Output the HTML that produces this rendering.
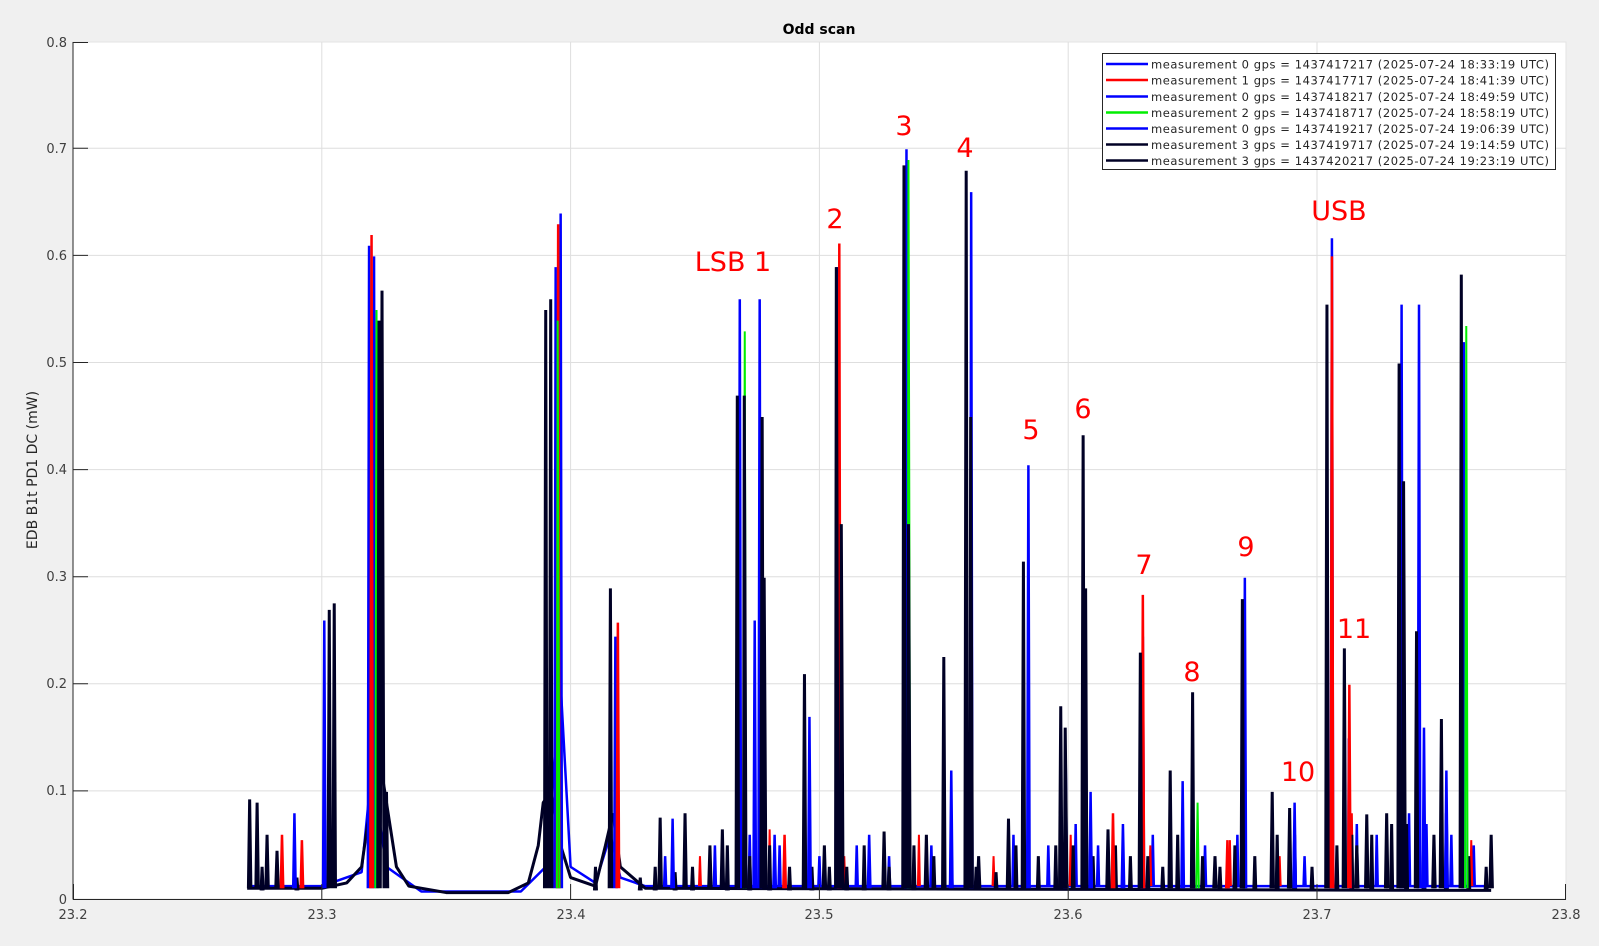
<!DOCTYPE html>
<html><head><meta charset="utf-8"><style>
html,body{margin:0;padding:0;background:#f0f0f0;}
svg{display:block;font-family:"DejaVu Sans","Liberation Sans",sans-serif;}
</style></head><body>
<svg width="1599" height="946" viewBox="0 0 1599 946" xmlns="http://www.w3.org/2000/svg">
<rect x="0" y="0" width="1599" height="946" fill="#f0f0f0"/>
<rect x="73" y="42" width="1493" height="857" fill="#fff" stroke="#e3e3e3"/>
<g stroke="#dedede" stroke-width="1">
<line x1="321.8" y1="42" x2="321.8" y2="899"/><line x1="570.6" y1="42" x2="570.6" y2="899"/><line x1="819.4" y1="42" x2="819.4" y2="899"/><line x1="1068.2" y1="42" x2="1068.2" y2="899"/><line x1="1317" y1="42" x2="1317" y2="899"/>
<line x1="73" y1="148.3" x2="1566" y2="148.3"/><line x1="73" y1="255.4" x2="1566" y2="255.4"/><line x1="73" y1="362.5" x2="1566" y2="362.5"/><line x1="73" y1="469.6" x2="1566" y2="469.6"/><line x1="73" y1="576.7" x2="1566" y2="576.7"/><line x1="73" y1="683.8" x2="1566" y2="683.8"/><line x1="73" y1="790.9" x2="1566" y2="790.9"/>
</g>
<g transform="translate(73,899) scale(2488,-1071) translate(-23.2,0)" fill="none" stroke-linejoin="bevel">
<!-- blue/red noise (narrow) -->
<g stroke="#0000ff" stroke-width="2.5">
<path vector-effect="non-scaling-stroke" d="M23.27 0.012 L23.3 0.012 L23.316 0.025 L23.32 0.12 L23.326 0.03 L23.34 0.007 L23.38 0.007 L23.39 0.03 L23.396 0.2 L23.4 0.03 L23.41 0.015 L23.416 0.06 L23.42 0.02 L23.43 0.012 L23.77 0.012"/>
<path vector-effect="non-scaling-stroke" d="M23.4376 0.012 L23.438 0.04 L23.4384 0.012 M23.4576 0.012 L23.458 0.05 L23.4584 0.012 M23.4716 0.012 L23.472 0.06 L23.4724 0.012 M23.4836 0.012 L23.484 0.05 L23.4844 0.012 M23.4996 0.012 L23.5 0.04 L23.5004 0.012 M23.5146 0.012 L23.515 0.05 L23.5154 0.012 M23.5276 0.012 L23.528 0.04 L23.5284 0.012 M23.5446 0.012 L23.545 0.05 L23.5454 0.012 M23.5776 0.012 L23.578 0.06 L23.5784 0.012 M23.5916 0.012 L23.592 0.05 L23.5924 0.012 M23.6026 0.012 L23.603 0.07 L23.6034 0.012 M23.6116 0.012 L23.612 0.05 L23.6124 0.012 M23.6336 0.012 L23.634 0.06 L23.6344 0.012 M23.6546 0.012 L23.655 0.05 L23.6554 0.012 M23.6676 0.012 L23.668 0.06 L23.6684 0.012 M23.6946 0.012 L23.695 0.04 L23.6954 0.012 M23.7156 0.012 L23.716 0.07 L23.7164 0.012 M23.7236 0.012 L23.724 0.06 L23.7244 0.012 M23.7366 0.012 L23.737 0.08 L23.7374 0.012 M23.7436 0.012 L23.744 0.07 L23.7444 0.012 M23.7536 0.012 L23.754 0.06 L23.7544 0.012 M23.7626 0.012 L23.763 0.05 L23.7634 0.012"/>
</g>
<g stroke="#ff0000" stroke-width="2">
<path vector-effect="non-scaling-stroke" d="M23.4516 0.012 L23.452 0.04 L23.4524 0.012 M23.4796 0.012 L23.48 0.065 L23.4804 0.012 M23.5096 0.012 L23.51 0.04 L23.5104 0.012 M23.5396 0.012 L23.54 0.06 L23.5404 0.012 M23.5696 0.012 L23.57 0.04 L23.5704 0.012 M23.6006 0.012 L23.601 0.06 L23.6014 0.012 M23.6326 0.012 L23.633 0.05 L23.6334 0.012 M23.6646 0.012 L23.665 0.055 L23.6654 0.012 M23.6846 0.012 L23.685 0.04 L23.6854 0.012 M23.7136 0.012 L23.714 0.08 L23.7144 0.012 M23.7326 0.012 L23.733 0.1 L23.7334 0.012 M23.7496 0.012 L23.75 0.08 L23.7504 0.012 M23.7616 0.012 L23.762 0.055 L23.7624 0.012"/>
</g>
<!-- broad skirts / noise black -->
<g stroke="#000025" stroke-width="3">
<path vector-effect="non-scaling-stroke" d="M23.27 0.01 L23.3 0.01 L23.31 0.015 L23.316 0.03 L23.319 0.08 L23.322 0.15 L23.326 0.09 L23.33 0.03 L23.335 0.012 L23.35 0.006 L23.375 0.006 L23.383 0.015 L23.387 0.05 L23.389 0.09 L23.392 0.1 L23.396 0.05 L23.4 0.02 L23.41 0.012 L23.414 0.05 L23.417 0.08 L23.42 0.03 L23.43 0.01 L23.77 0.008"/>
<path vector-effect="non-scaling-stroke" d="M23.2756 0.008 L23.276 0.03 L23.2764 0.008 M23.2896 0.008 L23.29 0.02 L23.2904 0.008 M23.4096 0.008 L23.41 0.03 L23.4104 0.008 M23.4276 0.008 L23.428 0.02 L23.4284 0.008 M23.4336 0.008 L23.434 0.03 L23.4344 0.008 M23.4416 0.008 L23.442 0.025 L23.4424 0.008 M23.4486 0.008 L23.449 0.03 L23.4494 0.008 M23.4626 0.008 L23.463 0.05 L23.4634 0.008 M23.4716 0.008 L23.472 0.04 L23.4724 0.008 M23.4796 0.008 L23.48 0.05 L23.4804 0.008 M23.4876 0.008 L23.488 0.03 L23.4884 0.008 M23.4966 0.008 L23.497 0.03 L23.4974 0.008 M23.5036 0.008 L23.504 0.03 L23.5044 0.008 M23.5106 0.008 L23.511 0.03 L23.5114 0.008 M23.5176 0.008 L23.518 0.05 L23.5184 0.008 M23.5276 0.008 L23.528 0.03 L23.5284 0.008 M23.5376 0.008 L23.538 0.05 L23.5384 0.008 M23.5456 0.008 L23.546 0.04 L23.5464 0.008 M23.5526 0.008 L23.553 0.05 L23.5534 0.008 M23.5626 0.008 L23.563 0.03 L23.5634 0.008 M23.5706 0.008 L23.571 0.025 L23.5714 0.008 M23.5786 0.008 L23.579 0.05 L23.5794 0.008 M23.5876 0.008 L23.588 0.04 L23.5884 0.008 M23.5946 0.008 L23.595 0.05 L23.5954 0.008 M23.6016 0.008 L23.602 0.05 L23.6024 0.008 M23.6096 0.008 L23.61 0.04 L23.6104 0.008 M23.6186 0.008 L23.619 0.05 L23.6194 0.008 M23.6246 0.008 L23.625 0.04 L23.6254 0.008 M23.6316 0.008 L23.632 0.04 L23.6324 0.008 M23.6376 0.008 L23.638 0.03 L23.6384 0.008 M23.6436 0.008 L23.644 0.06 L23.6444 0.008 M23.6536 0.008 L23.654 0.04 L23.6544 0.008 M23.6606 0.008 L23.661 0.03 L23.6614 0.008 M23.6666 0.008 L23.667 0.05 L23.6674 0.008 M23.6746 0.008 L23.675 0.04 L23.6754 0.008 M23.6836 0.008 L23.684 0.06 L23.6844 0.008 M23.6906 0.008 L23.691 0.06 L23.6914 0.008 M23.6976 0.008 L23.698 0.03 L23.6984 0.008 M23.7076 0.008 L23.708 0.05 L23.7084 0.008 M23.7136 0.008 L23.714 0.06 L23.7144 0.008 M23.7216 0.008 L23.722 0.06 L23.7224 0.008 M23.7296 0.008 L23.73 0.07 L23.7304 0.008 M23.7356 0.008 L23.736 0.07 L23.7364 0.008 M23.7426 0.008 L23.743 0.08 L23.7434 0.008 M23.7516 0.008 L23.752 0.08 L23.7524 0.008 M23.7606 0.008 L23.761 0.04 L23.7614 0.008 M23.7676 0.008 L23.768 0.03 L23.7684 0.008"/>
</g>
<!-- blue peaks -->
<g stroke="#0000ff" stroke-width="2.5">
<path vector-effect="non-scaling-stroke" d="M23.2885 0.01 L23.289 0.08 L23.2895 0.01 M23.3005 0.01 L23.301 0.26 L23.3015 0.01 M23.3185 0.01 L23.319 0.61 L23.3195 0.01 M23.3205 0.01 L23.321 0.6 L23.3215 0.01 M23.3955 0.01 L23.396 0.64 L23.3965 0.01 M23.3935 0.01 L23.394 0.59 L23.3945 0.01 M23.4175 0.01 L23.418 0.245 L23.4185 0.01 M23.4405 0.01 L23.441 0.075 L23.4415 0.01 M23.4675 0.01 L23.468 0.56 L23.4685 0.01 M23.4755 0.01 L23.476 0.56 L23.4765 0.01 M23.4735 0.01 L23.474 0.26 L23.4745 0.01 M23.4955 0.01 L23.496 0.17 L23.4965 0.01 M23.5065 0.01 L23.507 0.59 L23.5075 0.01 M23.5345 0.01 L23.535 0.7 L23.5355 0.01 M23.5605 0.01 L23.561 0.66 L23.5615 0.01 M23.5835 0.01 L23.584 0.405 L23.5845 0.01 M23.5985 0.01 L23.599 0.13 L23.5995 0.01 M23.6295 0.01 L23.63 0.245 L23.6305 0.01 M23.6705 0.01 L23.671 0.3 L23.6715 0.01 M23.6905 0.01 L23.691 0.09 L23.6915 0.01 M23.7055 0.01 L23.706 0.617 L23.7065 0.01 M23.7335 0.01 L23.734 0.555 L23.7345 0.01 M23.7405 0.01 L23.741 0.555 L23.7415 0.01 M23.7585 0.01 L23.759 0.52 L23.7595 0.01 M23.6455 0.01 L23.646 0.11 L23.6465 0.01 M23.6215 0.01 L23.622 0.07 L23.6225 0.01 M23.5195 0.01 L23.52 0.06 L23.5205 0.01 M23.4815 0.01 L23.482 0.06 L23.4825 0.01 M23.6085 0.01 L23.609 0.1 L23.6095 0.01 M23.5525 0.01 L23.553 0.12 L23.5535 0.01 M23.7125 0.01 L23.7128 0.15 L23.7135 0.01 M23.7425 0.01 L23.743 0.16 L23.7435 0.01 M23.7515 0.01 L23.752 0.12 L23.7525 0.01"/>
</g>
<!-- red peaks -->
<g stroke="#ff0000" stroke-width="2.5">
<path vector-effect="non-scaling-stroke" d="M23.2835 0.01 L23.284 0.06 L23.2845 0.01 M23.2915 0.01 L23.292 0.055 L23.2925 0.01 M23.3195 0.01 L23.32 0.62 L23.3205 0.01 M23.3945 0.01 L23.395 0.63 L23.3955 0.01 M23.4185 0.01 L23.419 0.258 L23.4195 0.01 M23.5075 0.01 L23.508 0.612 L23.5085 0.01 M23.6295 0.01 L23.63 0.284 L23.6305 0.01 M23.7055 0.01 L23.706 0.6 L23.7065 0.01 M23.4855 0.01 L23.486 0.06 L23.4865 0.01 M23.6635 0.01 L23.664 0.055 L23.6645 0.01 M23.7125 0.01 L23.713 0.2 L23.7135 0.01 M23.6175 0.01 L23.618 0.08 L23.6185 0.01"/>
</g>
<!-- green peaks -->
<g stroke="#00ee00" stroke-width="2">
<path vector-effect="non-scaling-stroke" d="M23.3215 0.01 L23.322 0.55 L23.3225 0.01 M23.3945 0.01 L23.3948 0.54 L23.3955 0.01 M23.4695 0.01 L23.47 0.53 L23.4705 0.01 M23.7595 0.01 L23.76 0.535 L23.7605 0.01 M23.5355 0.01 L23.5358 0.69 L23.5365 0.01 M23.6515 0.01 L23.652 0.09 L23.6525 0.01"/>
</g>
<!-- black peaks -->
<g stroke="#000025" stroke-width="3">
<path vector-effect="non-scaling-stroke" d="M23.2705 0.01 L23.271 0.093 L23.2715 0.01 M23.2735 0.01 L23.274 0.09 L23.2745 0.01 M23.2775 0.01 L23.278 0.06 L23.2785 0.01 M23.3025 0.01 L23.303 0.27 L23.3035 0.01 M23.3045 0.01 L23.305 0.276 L23.3055 0.01 M23.3225 0.01 L23.323 0.54 L23.3235 0.01 M23.3235 0.01 L23.3242 0.568 L23.325 0.01 M23.3255 0.01 L23.326 0.1 L23.3265 0.01 M23.3895 0.01 L23.39 0.55 L23.3905 0.01 M23.3915 0.01 L23.392 0.56 L23.3925 0.01 M23.4155 0.01 L23.416 0.29 L23.4165 0.01 M23.4355 0.01 L23.436 0.076 L23.4365 0.01 M23.4455 0.01 L23.446 0.08 L23.4465 0.01 M23.4665 0.01 L23.467 0.47 L23.4675 0.01 M23.4695 0.01 L23.4698 0.47 L23.4705 0.01 M23.4765 0.01 L23.477 0.45 L23.4775 0.01 M23.4935 0.01 L23.494 0.21 L23.4945 0.01 M23.5065 0.01 L23.5068 0.59 L23.5075 0.01 M23.5255 0.01 L23.526 0.063 L23.5265 0.01 M23.5335 0.01 L23.534 0.685 L23.5345 0.01 M23.5495 0.01 L23.55 0.226 L23.5505 0.01 M23.5585 0.01 L23.559 0.68 L23.5595 0.01 M23.5815 0.01 L23.582 0.315 L23.5825 0.01 M23.5755 0.01 L23.576 0.075 L23.5765 0.01 M23.5965 0.01 L23.597 0.18 L23.5975 0.01 M23.6055 0.01 L23.606 0.433 L23.6065 0.01 M23.6065 0.01 L23.607 0.29 L23.6075 0.01 M23.6285 0.01 L23.629 0.23 L23.6295 0.01 M23.6405 0.01 L23.641 0.12 L23.6415 0.01 M23.6495 0.01 L23.65 0.193 L23.6505 0.01 M23.6695 0.01 L23.67 0.28 L23.6705 0.01 M23.6815 0.01 L23.682 0.1 L23.6825 0.01 M23.6885 0.01 L23.689 0.085 L23.6895 0.01 M23.7035 0.01 L23.704 0.555 L23.7045 0.01 M23.7105 0.01 L23.711 0.234 L23.7115 0.01 M23.7195 0.01 L23.72 0.079 L23.7205 0.01 M23.7275 0.01 L23.728 0.08 L23.7285 0.01 M23.7325 0.01 L23.733 0.5 L23.7335 0.01 M23.7395 0.01 L23.74 0.25 L23.7405 0.01 M23.7495 0.01 L23.75 0.168 L23.7505 0.01 M23.7575 0.01 L23.758 0.583 L23.7585 0.01 M23.7695 0.01 L23.77 0.06 L23.7705 0.01 M23.5635 0.01 L23.564 0.04 L23.5645 0.01 M23.5425 0.01 L23.543 0.06 L23.5435 0.01 M23.6155 0.01 L23.616 0.065 L23.6165 0.01 M23.6585 0.01 L23.659 0.04 L23.6595 0.01 M23.7155 0.01 L23.716 0.05 L23.7165 0.01 M23.7465 0.01 L23.747 0.06 L23.7475 0.01 M23.4555 0.01 L23.456 0.05 L23.4565 0.01 M23.4605 0.01 L23.461 0.065 L23.4615 0.01 M23.5015 0.01 L23.502 0.05 L23.5025 0.01 M23.2815 0.01 L23.282 0.045 L23.2825 0.01 M23.5985 0.01 L23.5988 0.16 L23.5995 0.01 M23.4775 0.01 L23.4778 0.3 L23.4785 0.01 M23.5085 0.01 L23.5088 0.35 L23.5095 0.01 M23.5355 0.01 L23.5358 0.35 L23.5365 0.01 M23.5605 0.01 L23.5608 0.45 L23.5615 0.01 M23.7345 0.01 L23.7348 0.39 L23.7355 0.01"/>
</g>
</g>
<!-- axes -->
<g stroke="#262626" stroke-width="1" fill="none">
<line x1="73" y1="42" x2="73" y2="899.5"/><line x1="73" y1="899.5" x2="1566" y2="899.5"/>
<path d="M73 42.5h15M73 148.3h15M73 255.4h15M73 362.5h15M73 469.6h15M73 576.7h15M73 683.8h15M73 790.9h15"/>
<path d="M73.5 899v-15M321.8 899v-15M570.6 899v-15M819.4 899v-15M1068.2 899v-15M1317 899v-15M1565.5 899v-15"/>
</g>
<g fill="#404040" font-size="13" text-anchor="end">
<text x="67" y="47">0.8</text><text x="67" y="153">0.7</text><text x="67" y="260">0.6</text><text x="67" y="367">0.5</text><text x="67" y="474">0.4</text><text x="67" y="581">0.3</text><text x="67" y="688">0.2</text><text x="67" y="795">0.1</text><text x="67" y="904">0</text>
</g>
<g fill="#404040" font-size="13" text-anchor="middle">
<text x="73" y="919">23.2</text><text x="322" y="919">23.3</text><text x="571" y="919">23.4</text><text x="819" y="919">23.5</text><text x="1068" y="919">23.6</text><text x="1317" y="919">23.7</text><text x="1566" y="919">23.8</text>
</g>
<text x="0" y="0" transform="translate(37,470) rotate(-90)" text-anchor="middle" font-size="14" fill="#262626">EDB B1t PD1 DC (mW)</text>
<text x="819" y="34" text-anchor="middle" font-size="14" font-weight="bold" fill="#000">Odd scan</text>
<g fill="#ff0000" font-size="27" text-anchor="middle">
<text x="904" y="135">3</text><text x="965" y="157">4</text><text x="835" y="228">2</text><text x="733" y="271">LSB 1</text><text x="1339" y="220">USB</text><text x="1031" y="439">5</text><text x="1083" y="418">6</text><text x="1144" y="574">7</text><text x="1192" y="681">8</text><text x="1246" y="556">9</text><text x="1298" y="781">10</text><text x="1354" y="638">11</text>
</g>
<rect x="1102.5" y="53.5" width="453" height="116" fill="#fff" stroke="#262626"/>
<g stroke-width="2.5">
<line x1="1106" y1="64" x2="1148" y2="64" stroke="#0000ff"/>
<line x1="1106" y1="80" x2="1148" y2="80" stroke="#ff0000"/>
<line x1="1106" y1="96.5" x2="1148" y2="96.5" stroke="#0000ff"/>
<line x1="1106" y1="112.5" x2="1148" y2="112.5" stroke="#00ee00"/>
<line x1="1106" y1="128.5" x2="1148" y2="128.5" stroke="#0000ff"/>
<line x1="1106" y1="144.5" x2="1148" y2="144.5" stroke="#000025"/>
<line x1="1106" y1="160.5" x2="1148" y2="160.5" stroke="#000025"/>
</g>
<g font-size="11.5" fill="#262626">
<text x="1151" y="68.5" textLength="398">measurement 0 gps = 1437417217 (2025-07-24 18:33:19 UTC)</text>
<text x="1151" y="84.5" textLength="398">measurement 1 gps = 1437417717 (2025-07-24 18:41:39 UTC)</text>
<text x="1151" y="101" textLength="398">measurement 0 gps = 1437418217 (2025-07-24 18:49:59 UTC)</text>
<text x="1151" y="117" textLength="398">measurement 2 gps = 1437418717 (2025-07-24 18:58:19 UTC)</text>
<text x="1151" y="133" textLength="398">measurement 0 gps = 1437419217 (2025-07-24 19:06:39 UTC)</text>
<text x="1151" y="149" textLength="398">measurement 3 gps = 1437419717 (2025-07-24 19:14:59 UTC)</text>
<text x="1151" y="165" textLength="398">measurement 3 gps = 1437420217 (2025-07-24 19:23:19 UTC)</text>
</g>
</svg>
</body></html>
